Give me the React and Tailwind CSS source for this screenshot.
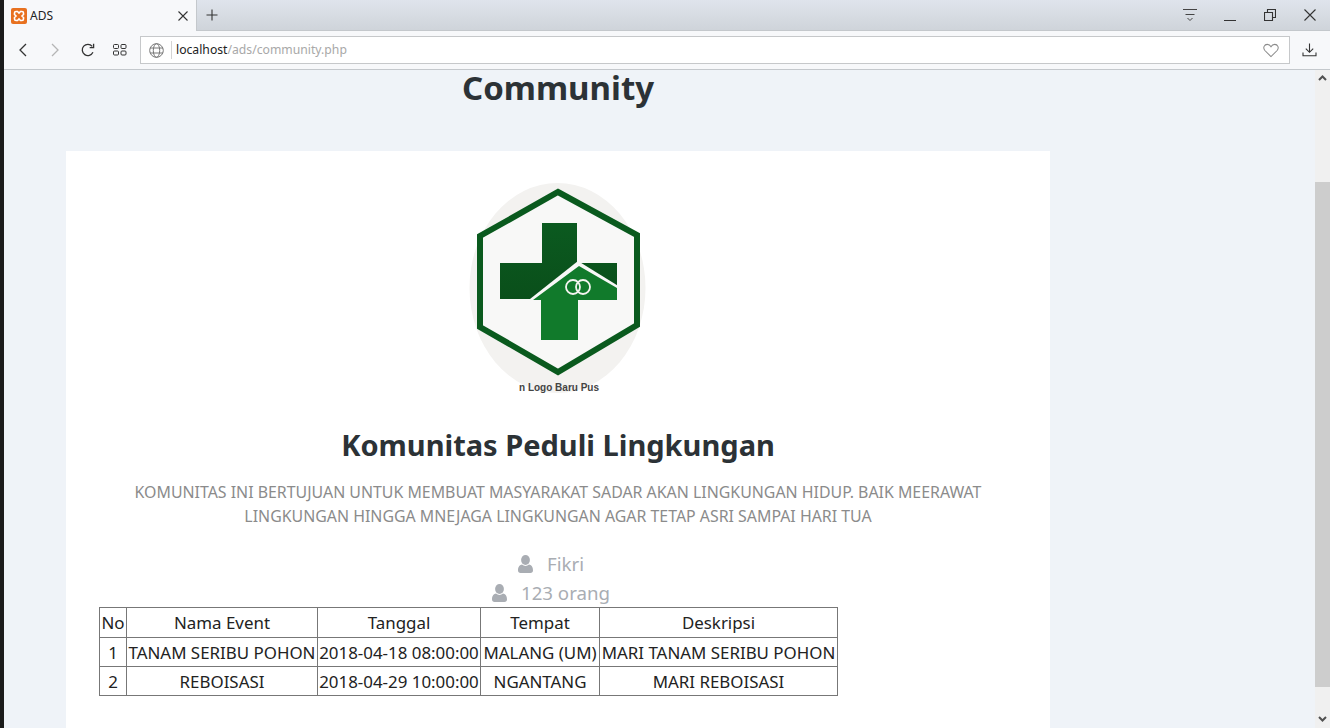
import React from 'react';

function Logo() {
  return (
    <svg width="200" height="225" viewBox="0 0 200 225" className="block">
      <defs>
        <clipPath id="logoClip">
          <rect x="0" y="0" width="200" height="218" />
        </clipPath>
        <linearGradient id="darkGreen" x1="0" y1="0" x2="0" y2="1">
          <stop offset="0" stopColor="#0b5a20" />
          <stop offset="1" stopColor="#0a4f1a" />
        </linearGradient>
      </defs>
      <g clipPath="url(#logoClip)">
        <ellipse cx="97.5" cy="113" rx="88" ry="105" fill="#f3f2f0" />
        <path d="M98 17 L177 60 L177 150 L98 197 L20 152 L20 61 Z" fill="#f8f8f7" stroke="#0a5a1e" strokeWidth="6" strokeLinejoin="miter" />
        <path d="M82 48 H117 V88 H157 V124 H40 V88 H82 Z" fill="url(#darkGreen)" />
        <path d="M118 86 L160 112 V126 H70 V124 Z" fill="#f8f8f7" />
        <path d="M119 91 L157 113 V125 H118 V165 H81 V125 H73 Z" fill="#117a2b" />
        <circle cx="113" cy="112" r="7" fill="none" stroke="#f4f4f0" strokeWidth="1.8" />
        <circle cx="123" cy="112" r="7" fill="none" stroke="#f4f4f0" strokeWidth="1.8" />
        <text x="99" y="216" textAnchor="middle" fontSize="10" fontWeight="700" fill="#444" fontFamily="'Liberation Sans', sans-serif">
          n Logo Baru Pus
        </text>
      </g>
    </svg>
  );
}

const rows = [
  ['1', 'TANAM SERIBU POHON', '2018-04-18 08:00:00', 'MALANG (UM)', 'MARI TANAM SERIBU POHON'],
  ['2', 'REBOISASI', '2018-04-29 10:00:00', 'NGANTANG', 'MARI REBOISASI'],
];

function PersonIcon() {
  return (
    <svg width="15" height="18" viewBox="0 0 15 18" fill="#a9adb3">
      <ellipse cx="7.5" cy="5" rx="4.4" ry="5" />
      <path d="M0 15.5 C0 11.5 2 10 4 9.6 C6 11.4 9 11.4 11 9.6 C13 10 15 11.5 15 15.5 C15 17 14 18 12.5 18 H2.5 C1 18 0 17 0 15.5 Z" />
    </svg>
  );
}

function Chrome() {
  return (
    <div className="shrink-0">
      <div className="h-[31px] flex bg-gradient-to-b from-[#dfe4ec] to-[#cfd4da] border-b border-[#c4c8cc]">
        <div className="w-[193px] h-[31px] bg-[#f7f8fa] border-r border-[#c4c8cc] flex items-center pl-[7px]">
          <svg width="16" height="16" viewBox="0 0 16 16" className="shrink-0">
            <rect width="16" height="16" rx="2" fill="#e8711f" />
            <path d="M3.5 5 Q3.5 3.5 5 3.5 H6.5 L8 5 L9.5 3.5 H11 Q12.5 3.5 12.5 5 V6.5 L11 8 L12.5 9.5 V11 Q12.5 12.5 11 12.5 H9.5 L8 11 L6.5 12.5 H5 Q3.5 12.5 3.5 11 V9.5 L5 8 L3.5 6.5 Z" fill="none" stroke="#fff" strokeWidth="1.6" />
          </svg>
          <span className="ml-[3px] text-[12px] text-[#222]">ADS</span>
          <svg width="12" height="12" viewBox="0 0 12 12" className="ml-auto mr-[7px]" stroke="#333" strokeWidth="1.1" fill="none">
            <path d="M1.5 1.5 L10.5 10.5 M10.5 1.5 L1.5 10.5" />
          </svg>
        </div>
        <svg width="12" height="12" viewBox="0 0 12 12" className="ml-[9px] mt-[9px]" stroke="#333" strokeWidth="1.1" fill="none">
          <path d="M6 0.5 V11.5 M0.5 6 H11.5" />
        </svg>
        <div className="ml-auto flex h-[31px] items-start pt-[9px]">
          <svg width="14" height="12" viewBox="0 0 14 12" className="mr-[27px]" stroke="#444" strokeWidth="1" fill="none">
            <path d="M0 0.5 H14 M2.5 5.5 H11.5 M4.5 9 L7 11.5 L9.5 9" />
          </svg>
          <svg width="12" height="12" viewBox="0 0 12 12" className="mr-[28px]" stroke="#333" strokeWidth="1" fill="none">
            <path d="M0 11.5 H12" />
          </svg>
          <svg width="12" height="12" viewBox="0 0 12 12" className="mr-[28px]" stroke="#333" strokeWidth="1.1" fill="none">
            <path d="M0.5 3.5 H8.5 V11.5 H0.5 Z M3.5 3.5 V0.5 H11.5 V8.5 H8.5" />
          </svg>
          <svg width="12" height="12" viewBox="0 0 12 12" className="mr-[14px]" stroke="#333" strokeWidth="1.1" fill="none">
            <path d="M0.5 0.5 L11.5 11.5 M11.5 0.5 L0.5 11.5" />
          </svg>
        </div>
      </div>
      <div className="h-[39px] bg-[#f7f8fa] border-b border-[#c4c8cc] flex items-center">
        <svg width="10" height="14" viewBox="0 0 10 14" className="ml-[14px]" stroke="#333" strokeWidth="1.3" fill="none">
          <path d="M8 1 L2 7 L8 13" />
        </svg>
        <svg width="10" height="14" viewBox="0 0 10 14" className="ml-[22px]" stroke="#b5b5b5" strokeWidth="1.3" fill="none">
          <path d="M2 1 L8 7 L2 13" />
        </svg>
        <svg width="14" height="14" viewBox="0 0 15 15" className="ml-[21px]" stroke="#333" strokeWidth="1.4" fill="none">
          <path d="M12.8 10 A6 6 0 1 1 12 3.6" />
          <path d="M13.5 0.8 V5 H9.3" />
        </svg>
        <svg width="14" height="12" viewBox="0 0 14 12" className="ml-[18px]" stroke="#333" strokeWidth="1" fill="none">
          <rect x="0.5" y="0.5" width="5" height="4" rx="1" />
          <rect x="8" y="0.5" width="5" height="4" rx="1" />
          <rect x="0.5" y="7" width="5" height="4" rx="1" />
          <rect x="8" y="7" width="5" height="4" rx="1" />
        </svg>
        <div className="ml-[13px] w-[1150px] h-[28px] bg-white border border-[#c6c8ca] flex items-center pl-[8px] pr-[10px]">
          <svg width="15" height="15" viewBox="0 0 15 15" stroke="#777" strokeWidth="1" fill="none" className="shrink-0">
            <circle cx="7.5" cy="7.5" r="6.8" />
            <ellipse cx="7.5" cy="7.5" rx="3.2" ry="6.8" />
            <path d="M1 5 H14 M1 10 H14" />
          </svg>
          <div className="ml-[7px] w-px h-[18px] bg-[#d4d4d4]" />
          <span className="ml-[4px] text-[12.2px] text-[#222] leading-none">
            localhost<span className="text-[#a8a8a8]">/ads/community.php</span>
          </span>
          <svg width="16" height="15" viewBox="0 0 17 15" stroke="#8a8a8a" strokeWidth="1.1" fill="none" className="ml-auto">
            <path d="M8.5 14 L2 7.5 C-0.5 4.5 1.5 1 4.5 1 C6.3 1 7.7 2 8.5 3.4 C9.3 2 10.7 1 12.5 1 C15.5 1 17.5 4.5 15 7.5 Z" />
          </svg>
        </div>
        <svg width="15" height="14" viewBox="0 0 15 14" className="ml-[12px]" stroke="#333" strokeWidth="1.1" fill="none">
          <path d="M7.5 0.5 V9 M3.8 5.6 L7.5 9.3 L11.2 5.6 M1 9.5 V12.8 H14 V9.5" />
        </svg>
      </div>
    </div>
  );
}

export default function App() {
  return (
    <div className="h-[728px] w-[1330px] overflow-hidden flex font-['Noto_Sans',sans-serif]">
      <div className="w-[4px] bg-[#1b1b1b] shrink-0" />
      <div className="flex-1 flex flex-col min-w-0">
        <Chrome />
        <div className="flex-1 flex min-h-0 bg-[#eff3f8]">
          <main className="w-[1046px] pl-[62px]">
            <h1 className="h-[81px] text-center text-[33px] leading-[36px] font-bold text-[#2c3236]">
              Community
            </h1>
            <section className="w-[984px] h-[577px] bg-white pt-[24px] pl-[33px]">
              <div className="h-[225px] pl-[361px]">
                <Logo />
              </div>
              <h2 className="mt-[27px] pr-[33px] text-center text-[29px] leading-[36px] font-bold text-[#2c3236]">
                Komunitas Peduli Lingkungan
              </h2>
              <p className="mt-[17px] pr-[33px] mx-auto w-[900px] text-center text-[15.9px] leading-[24px] text-[#8b8b8b]">
                KOMUNITAS INI BERTUJUAN UNTUK MEMBUAT MASYARAKAT SADAR AKAN LINGKUNGAN HIDUP. BAIK MEERAWAT LINGKUNGAN HINGGA MNEJAGA LINGKUNGAN AGAR TETAP ASRI SAMPAI HARI TUA
              </p>
              <div className="mt-[21px] pr-[47px] flex flex-col items-center text-[18.7px] leading-[29px] text-[#a9adb3]">
                <div className="flex items-center gap-[14px]"><PersonIcon /><span>Fikri</span></div>
                <div className="flex items-center gap-[14px]"><PersonIcon /><span>123 orang</span></div>
              </div>
              <table className="border-collapse border border-black text-[16.9px] leading-[27px] text-[#222] text-center">
                <thead>
                  <tr>
                    {['No', 'Nama Event', 'Tanggal', 'Tempat', 'Deskripsi'].map((h, i) => (
                      <th key={i} className={`font-normal border border-[#777] h-[30px] p-0 ${['w-[27px]', 'w-[191px]', 'w-[163px]', 'w-[119px]', 'w-[238px]'][i]}`}>
                        {h}
                      </th>
                    ))}
                  </tr>
                </thead>
                <tbody>
                  {rows.map((row) => (
                    <tr key={row[0]}>
                      {row.map((c, i) => (
                        <td key={i} className="border border-[#777] p-0 h-[29px] whitespace-nowrap">{c}</td>
                      ))}
                    </tr>
                  ))}
                </tbody>
              </table>
            </section>
          </main>
          <div className="ml-auto w-[15px] bg-[#f0f0f0] flex flex-col items-center">
            <svg width="9" height="6" viewBox="0 0 9 6" className="mt-[5px] shrink-0" fill="none" stroke="#505050" strokeWidth="2">
              <path d="M1 5 L4.5 1.5 L8 5" />
            </svg>
            <div className="mt-[101px] w-full h-[505px] bg-[#cdcdcd] shrink-0" />
            <svg width="9" height="6" viewBox="0 0 9 6" className="mt-[29px] shrink-0" fill="none" stroke="#505050" strokeWidth="2">
              <path d="M1 1 L4.5 4.5 L8 1" />
            </svg>
          </div>
        </div>
      </div>
    </div>
  );
}
